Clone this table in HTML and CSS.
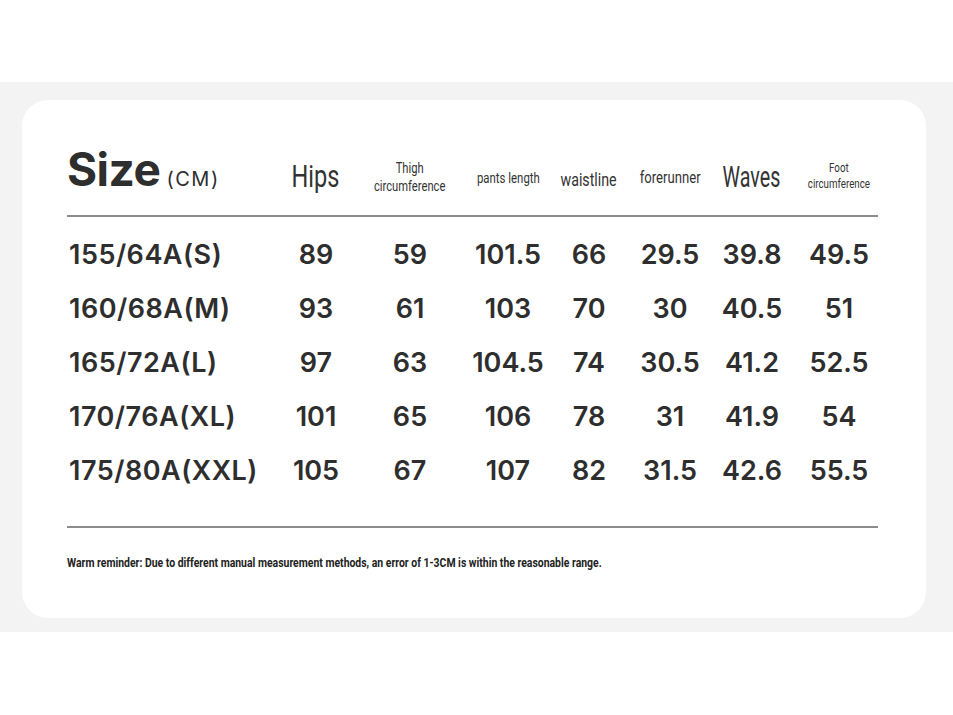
FILE: index.html
```html
<!DOCTYPE html>
<html>
<head>
<meta charset="utf-8">
<link rel="stylesheet" href="styles.css">
</head>
<body>
<div class="band">
  <div class="card">
    <div class="table">
      <div class="row head">
        <div class="title"><span class="size">Size</span><span class="cm">(CM)</span></div>
        <div class="h"><span class="t hips">Hips</span></div>
        <div class="h"><span class="t thigh">Thigh<br>circumference</span></div>
        <div class="h"><span class="t pants">pants length</span></div>
        <div class="h"><span class="t waist">waistline</span></div>
        <div class="h"><span class="t fore">forerunner</span></div>
        <div class="h"><span class="t waves">Waves</span></div>
        <div class="h"><span class="t foot">Foot<br>circumference</span></div>
      </div>
      <div class="body">
        <div class="row data"><div class="lab">155/64A(S)</div><div>89</div><div>59</div><div>101.5</div><div>66</div><div>29.5</div><div>39.8</div><div>49.5</div></div>
        <div class="row data"><div class="lab">160/68A(M)</div><div>93</div><div>61</div><div>103</div><div>70</div><div>30</div><div>40.5</div><div>51</div></div>
        <div class="row data"><div class="lab">165/72A(L)</div><div>97</div><div>63</div><div>104.5</div><div>74</div><div>30.5</div><div>41.2</div><div>52.5</div></div>
        <div class="row data"><div class="lab">170/76A(XL)</div><div>101</div><div>65</div><div>106</div><div>78</div><div>31</div><div>41.9</div><div>54</div></div>
        <div class="row data"><div class="lab">175/80A(XXL)</div><div>105</div><div>67</div><div>107</div><div>82</div><div>31.5</div><div>42.6</div><div>55.5</div></div>
      </div>
    </div>
    <p class="note"><span>Warm reminder: Due to different manual measurement methods, an error of 1-3CM is within the reasonable range.</span></p>
  </div>
</div>
</body>
</html>
```
FILE: styles.css
```css
html, body {
  margin: 0;
  padding: 0;
  background: #ffffff;
}
body {
  width: 953px;
  height: 715px;
  overflow: hidden;
  color: #2e2e2e;
  font-family: Inter, "Noto Sans", sans-serif;
}
.band {
  margin-top: 82px;
  height: 550px;
  box-sizing: border-box;
  background: #f3f3f3;
  padding: 18px 27px 14px 22px;
}
.card {
  height: 100%;
  box-sizing: border-box;
  background: #ffffff;
  border-radius: 26px;
  padding: 46px 0 0 45px;
}
.table {
  width: 811px;
}
.row {
  display: grid;
  grid-template-columns: 202px 94px 94px 102px 60px 102px 62px 112px;
  align-items: center;
}
.row > div {
  text-align: center;
  white-space: nowrap;
}
.head {
  height: 69px;
  border-bottom: 2px solid #8c8c8c;
}
.title {
  text-align: left !important;
  display: flex;
  align-items: baseline;
  margin-top: -24px;
}
.size {
  font-size: 46px;
  font-weight: 700;
  letter-spacing: -0.5px;
}
.cm {
  font-size: 20px;
  font-weight: 400;
  margin-left: 6px;
  letter-spacing: 1.5px;
}
.h {
  font-family: Roboto, sans-serif;
  color: #333;
  display: flex;
  justify-content: center;
}
.t {
  display: inline-block;
  transform-origin: center;
  flex: none;
}
.hips { font-size: 31px; transform: scaleX(0.76); margin-top: -8px; }
.waves { font-size: 29px; transform: scaleX(0.68); margin-top: -7px; }
.thigh { font-size: 14px; line-height: 18px; transform: scaleX(0.8); margin-top: -8px; }
.pants { font-size: 15px; transform: scaleX(0.76); margin-top: -6px; }
.waist { font-size: 18px; transform: scaleX(0.79); margin-top: -2px; }
.fore { font-size: 16px; transform: scaleX(0.82); margin-top: -6px; }
.foot { font-size: 12.5px; line-height: 16px; transform: scaleX(0.78); margin-top: -10px; }
.body {
  padding: 10px 0 29px;
  border-bottom: 2px solid #8c8c8c;
}
.data {
  height: 54px;
  font-size: 27px;
  font-weight: 600;
}
.data > div {
  display: flex;
  justify-content: center;
}
.data .lab {
  justify-content: flex-start;
  padding-left: 2px;
  letter-spacing: 0.5px;
}
.note {
  margin: 28px 0 0;
  font-family: Roboto, sans-serif;
  font-weight: 700;
  font-size: 12px;
  color: #222;
  white-space: nowrap;
}
.note span {
  display: inline-block;
  transform: scaleX(0.87);
  transform-origin: left center;
}
```
